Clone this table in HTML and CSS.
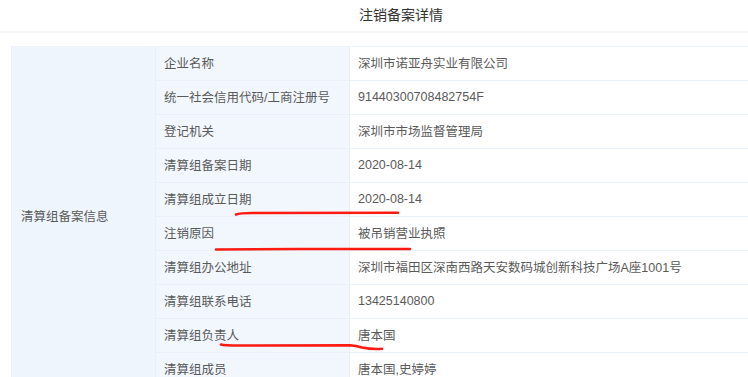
FILE: index.html
```html
<!DOCTYPE html>
<html lang="zh-CN">
<head>
<meta charset="utf-8">
<title>注销备案详情</title>
<link rel="stylesheet" href="styles.css">
</head>
<body>
<div class="page">
  <div class="header"><h1 class="title">注销备案详情</h1></div>
  <table class="detail">
    <colgroup><col class="c1"><col class="c2"><col class="c3"></colgroup>
    <tbody>
      <tr><td class="group" rowspan="10">清算组备案信息</td><td class="label">企业名称</td><td class="value">深圳市诺亚舟实业有限公司</td></tr>
      <tr><td class="label">统一社会信用代码/工商注册号</td><td class="value">91440300708482754F</td></tr>
      <tr><td class="label">登记机关</td><td class="value">深圳市市场监督管理局</td></tr>
      <tr><td class="label">清算组备案日期</td><td class="value">2020-08-14</td></tr>
      <tr><td class="label">清算组成立日期</td><td class="value">2020-08-14</td></tr>
      <tr><td class="label">注销原因</td><td class="value">被吊销营业执照</td></tr>
      <tr><td class="label">清算组办公地址</td><td class="value">深圳市福田区深南西路天安数码城创新科技广场A座1001号</td></tr>
      <tr><td class="label">清算组联系电话</td><td class="value">13425140800</td></tr>
      <tr><td class="label">清算组负责人</td><td class="value">唐本国</td></tr>
      <tr><td class="label">清算组成员</td><td class="value">唐本国,史婷婷</td></tr>
    </tbody>
  </table>
  <svg class="marks" width="748" height="377" viewBox="0 0 748 377" aria-hidden="true">
    <path d="M236 214.5 Q240 213 252 213 L398 212.8" />
    <path d="M216 249.5 L300 249 L410 249" />
    <path d="M221 344.5 Q224 345.5 240 345.5 L350 345.2 Q356 345.5 362 347.5 Q372 349.5 382 348.8" />
  </svg>
</div>
</body>
</html>
```

FILE: styles.css
```css
html, body {
  margin: 0;
  padding: 0;
  background: #fff;
  overflow: hidden;
}

.page {
  position: relative;
  width: 748px;
  height: 377px;
  overflow: hidden;
  font-family: "Liberation Sans", "Noto Sans CJK SC", sans-serif;
  color: #5a5a5a;
}

.header {
  height: 31px;
  padding-left: 54px;
  border-bottom: 2px solid #f4f6f8;
  display: flex;
  align-items: center;
  justify-content: center;
}

.title {
  margin: 0;
  font-size: 14px;
  font-weight: normal;
  color: #333;
  line-height: 1;
  padding-bottom: 2px;
}

.detail {
  margin: 13px 0 0 11px;
  width: 737px;
  border-collapse: collapse;
  table-layout: fixed;
  font-size: 12.5px;
}

.c1 { width: 144px; }
.c2 { width: 194px; }

.detail td {
  height: 34px;
  padding: 0 8px 2px 8px;
  box-sizing: border-box;
  border: 1px solid #e9f0f7;
  white-space: nowrap;
  overflow: hidden;
  vertical-align: middle;
}

.detail tr:first-child td {
  border-top-color: #eef4fa;
}

.group {
  background: #eef5fc;
  padding-left: 9px !important;
}

.label {
  background: #f1f7fd;
}

.value {
  background: #fff;
  border-left-color: #e6eef7 !important;
  border-right: none !important;
}

.marks {
  position: absolute;
  left: 0;
  top: 0;
  pointer-events: none;
}

.marks path {
  fill: none;
  stroke: #ff1a12;
  stroke-width: 2.6;
  stroke-linecap: round;
  stroke-linejoin: round;
}
```
